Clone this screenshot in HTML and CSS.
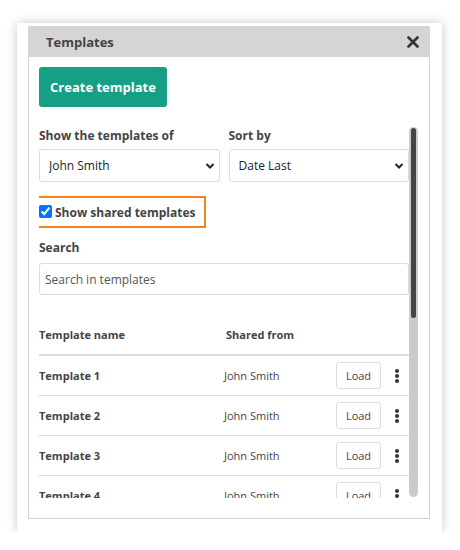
FILE: index.html
```html
<!DOCTYPE html>
<html>
<head>
<meta charset="utf-8">
<link rel="stylesheet" href="styles.css">
</head>
<body>
<div class="card">
  <div class="panel">
    <div class="panel-head">
      <span class="panel-title">Templates</span>
      <svg class="close" width="12" height="12" viewBox="0 0 12 12"><path d="M1.5 1.5L10.5 10.5M10.5 1.5L1.5 10.5" stroke="#333" stroke-width="2.6" stroke-linecap="round"/></svg>
    </div>
    <div class="panel-body">
      <button class="btn-create">Create template</button>
      <div class="scroll">
        <div class="scroll-content">
          <div class="filters">
            <div class="field">
              <div class="label">Show the templates of</div>
              <div class="select-wrap">
                <select class="select"><option>John Smith</option></select>
                <svg class="chev" width="10" height="8" viewBox="0 0 10 8"><path d="M1.5 2L5 5.5L8.5 2" fill="none" stroke="#222" stroke-width="2"/></svg>
              </div>
            </div>
            <div class="field">
              <div class="label">Sort by</div>
              <div class="select-wrap">
                <select class="select"><option>Date Last</option></select>
                <svg class="chev" width="10" height="8" viewBox="0 0 10 8"><path d="M1.5 2L5 5.5L8.5 2" fill="none" stroke="#222" stroke-width="2"/></svg>
              </div>
            </div>
          </div>
          <label class="shared"><input type="checkbox" checked class="chk"><span>Show shared templates</span></label>
          <div class="label search-label">Search</div>
          <input class="search" type="text" placeholder="Search in templates">
          <div class="table">
            <div class="row head"><span>Template name</span><span>Shared from</span><span></span></div>
            <div class="row"><span class="name">Template 1</span><span class="from">John Smith</span><span class="actions"><button class="load">Load</button><span class="dots"><i></i><i></i><i></i></span></span></div>
            <div class="row"><span class="name">Template 2</span><span class="from">John Smith</span><span class="actions"><button class="load">Load</button><span class="dots"><i></i><i></i><i></i></span></span></div>
            <div class="row"><span class="name">Template 3</span><span class="from">John Smith</span><span class="actions"><button class="load">Load</button><span class="dots"><i></i><i></i><i></i></span></span></div>
            <div class="row"><span class="name">Template 4</span><span class="from">John Smith</span><span class="actions"><button class="load">Load</button><span class="dots"><i></i><i></i><i></i></span></span></div>
          </div>
        </div>
        <div class="scrollbar"><div class="thumb"></div></div>
      </div>
    </div>
  </div>
</div>
</body>
</html>
```
FILE: styles.css
```css
* { box-sizing: border-box; }
html, body { margin: 0; background: #fff; }
body {
  font-family: "Open Sans", "DejaVu Sans", sans-serif;
  color: #444;
  padding: 23px 18px 0 17px;
}
.card {
  background: #fff;
  width: 425px;
  height: 509px;
  box-shadow: 0 0 10px rgba(0,0,0,0.22);
  padding: 3px 12px 13px 11px;
}
.panel {
  height: 100%;
  border: 1px solid #d2d2d2;
  border-top: none;
  display: flex;
  flex-direction: column;
}
.panel-head {
  height: 31px;
  background: #d5d5d5;
  margin: 0 -1px;
  display: flex;
  align-items: center;
  justify-content: space-between;
  padding: 0 11px 0 18px;
}
.panel-title { font-weight: 700; font-size: 13px; color: #444; }
.close { display: block; }
.panel-body {
  flex: 1;
  min-height: 0;
  padding: 10px 11px 20px 10px;
  display: flex;
  flex-direction: column;
}
.btn-create {
  align-self: flex-start;
  width: 128px;
  height: 40px;
  background: #15a085;
  color: #fff;
  border: none;
  border-radius: 3px;
  font-family: inherit;
  font-weight: 700;
  font-size: 13px;
  padding: 0;
  margin-bottom: 20px;
}
.scroll {
  flex: 1;
  min-height: 0;
  display: flex;
}
.scroll-content {
  flex: 1;
  min-width: 0;
  overflow: hidden;
}
.scrollbar {
  width: 9px;
  height: 370px;
  background: #cbcbcb;
  border-radius: 5px;
  padding: 1px 2px;
}
.thumb {
  height: 190px;
  background: #444;
  border-radius: 3px;
}
.filters { display: flex; gap: 9px; }
.field { flex: 1; }
.label { font-weight: 700; font-size: 12px; line-height: 18px; color: #444; }
.filters .label { margin-bottom: 4px; }
.select-wrap { position: relative; }
.select {
  appearance: none;
  -webkit-appearance: none;
  width: 100%;
  height: 33px;
  border: 1px solid #dcdcdc;
  border-radius: 3px;
  background: #fff;
  font-family: inherit;
  font-size: 12px;
  color: #222;
  padding: 0 0 0 9px;
}
.chev { position: absolute; right: 5px; top: 13px; }
.shared {
  display: flex;
  align-items: center;
  width: fit-content;
  margin: 14px 0 0 -5px;
  height: 32px;
  border: 2px solid #f7821f;
  padding: 0 8px 0 3px;
  font-weight: 700;
  font-size: 12px;
  color: #444;
}
.chk { width: 13px; height: 13px; margin: 0 3px 2px 0; }
.search-label { margin-top: 11px; }
.search {
  display: block;
  width: 100%;
  height: 32px;
  margin-top: 6px;
  border: 1px solid #dcdcdc;
  border-radius: 3px;
  padding: 0 5px;
  font-family: inherit;
  font-size: 12px;
  color: #222;
}
.search::placeholder { color: #555; }
.table { margin-top: 21px; }
.row {
  display: grid;
  grid-template-columns: 185px 1fr auto;
  align-items: center;
  height: 40px;
  border-bottom: 1px solid #dcdcdc;
  font-size: 11px;
}
.row.head {
  height: 40px;
  border-bottom: 2px solid #dcdcdc;
  font-weight: 700;
  font-size: 11px;
  padding-bottom: 2px;
}
.row.head span:nth-child(2) { padding-left: 2px; }
.name { font-weight: 700; }
.from { color: #444; }
.actions { display: flex; align-items: center; }
.load {
  width: 45px;
  height: 27px;
  border: 1px solid #dcdcdc;
  border-radius: 3px;
  background: #fff;
  font-family: inherit;
  font-size: 11px;
  color: #444;
  padding: 0;
}
.dots {
  display: flex;
  flex-direction: column;
  gap: 1px;
  width: 28px;
  padding-left: 4px;
  align-items: center;
}
.dots i { display: block; width: 4px; height: 4px; border-radius: 50%; background: #333; }
```
